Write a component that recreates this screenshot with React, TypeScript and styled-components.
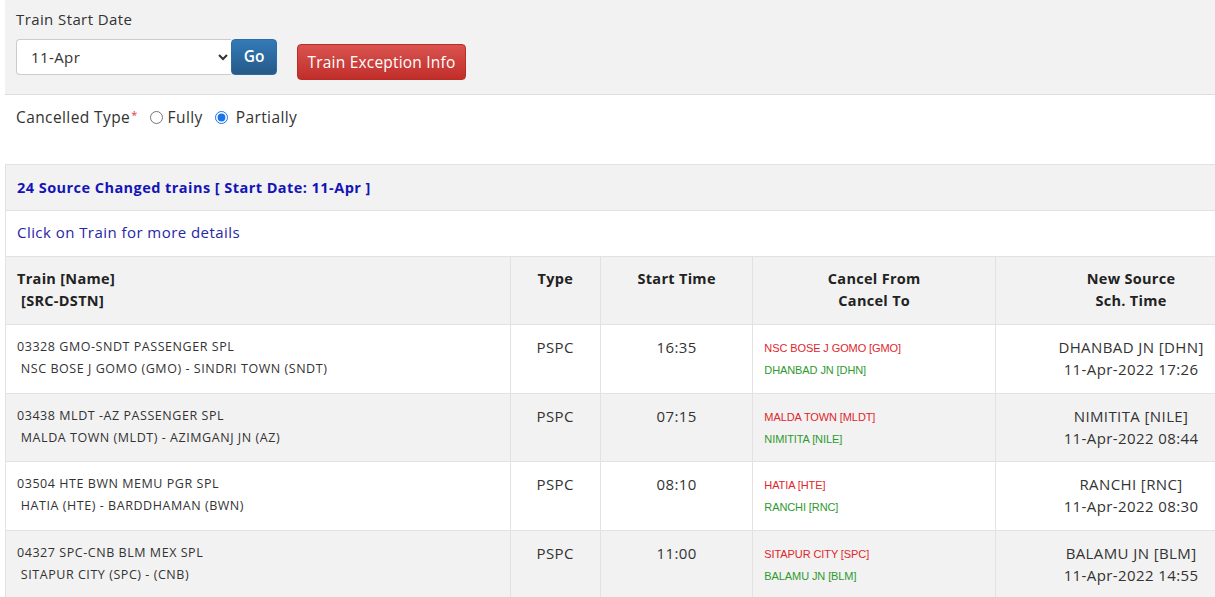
import { FC } from "react";
import styled, { createGlobalStyle } from "styled-components";

const Global = createGlobalStyle`
  html, body {
    margin: 0;
    padding: 0;
    background: #fff;
    overflow: hidden;
  }
  body {
    font-family: "Open Sans", "Noto Sans", sans-serif;
    color: #212529;
  }
`;

const Page = styled.div`
  width: 1262px;
  padding-left: 5px;
`;

const FilterPanel = styled.section`
  background: #f2f2f2;
  border-bottom: 1px solid #dedede;
  padding: 9px 0 15px 11px;
  height: 70px;
`;

const Label = styled.div`
  font-size: 15px;
  letter-spacing: 0.4px;
  line-height: 20px;
  color: #333;
  margin-bottom: 10px;
`;

const Controls = styled.div`
  display: flex;
  align-items: flex-start;
`;

const DateSelect = styled.select`
  width: 215px;
  height: 36px;
  border: 1px solid #ccc;
  border-right: none;
  border-radius: 4px 0 0 4px;
  background: #fff;
  padding: 0 8px 0 10px;
  font-family: inherit;
  font-size: 15px;
  letter-spacing: 0.4px;
  color: #333;
  outline: none;
`;

const GoButton = styled.button`
  height: 36px;
  width: 46px;
  border: 1px solid #2e6da4;
  border-radius: 4px;
  background: linear-gradient(#337ab7, #265a88);
  color: #fff;
  font-family: inherit;
  font-size: 15.5px;
  font-weight: 600;
  padding: 0 0 3px;
`;

const ExceptionButton = styled.button`
  margin: 5px 0 0 20px;
  height: 36px;
  width: 169px;
  border: 1px solid #b92c28;
  border-radius: 4px;
  background: linear-gradient(#d9534f, #c12e2a);
  color: #fff;
  font-family: inherit;
  font-size: 15.5px;
  letter-spacing: 0.2px;
  padding: 0 0 1px;
`;

const TypeRow = styled.div`
  display: flex;
  align-items: center;
  height: 44px;
  padding-left: 11px;
  font-size: 15.5px;
  letter-spacing: 0.4px;
  color: #333;
  margin-bottom: 25px;
`;

const Required = styled.span`
  color: #e4393c;
  font-size: 11px;
  align-self: flex-start;
  margin: 12px 12px 0 1px;
`;

const Radio = styled.label<{ $gap: number }>`
  display: flex;
  align-items: center;
  margin-right: 12px;

  input {
    margin: 0 ${(p) => p.$gap}px 0 0;
    width: 13px;
    height: 13px;
    accent-color: #1a73e8;
  }
`;

const Table = styled.table`
  width: 100%;
  border-collapse: collapse;
  border-left: 1px solid #e2e2e2;
`;

const Banner = styled.td<{ $shade?: boolean; $bold?: boolean }>`
  height: 46px;
  box-sizing: border-box;
  padding: 0 11px ${(p) => (p.$bold ? 1 : 3)}px;
  border-top: 1px solid #e2e2e2;
  background: ${(p) => (p.$shade ? "#f2f2f2" : "#fff")};
  color: ${(p) => (p.$bold ? "#1414b8" : "#2626a6")};
  font-weight: ${(p) => (p.$bold ? 700 : 400)};
  font-size: ${(p) => (p.$bold ? 14.5 : 15)}px;
  letter-spacing: 0.45px;
`;

const Head = styled.th<{ $w: number; $left?: boolean }>`
  width: ${(p) => p.$w}px;
  height: 68px;
  box-sizing: border-box;
  vertical-align: top;
  padding: 11px 11px 0;
  background: #f2f2f2;
  border: 1px solid #e2e2e2;
  border-left: ${(p) => (p.$left ? "none" : "1px solid #e2e2e2")};
  text-align: ${(p) => (p.$left ? "left" : "center")};
  font-size: 14.5px;
  letter-spacing: 0.3px;
  line-height: 22px;
  font-weight: 700;
  color: #222;
`;

const Row = styled.tr<{ $shade: boolean }>`
  background: ${(p) => (p.$shade ? "#f2f2f2" : "#fff")};
`;

const Cell = styled.td<{ $left?: boolean }>`
  height: 68.6px;
  box-sizing: border-box;
  vertical-align: top;
  padding: 11px 11px 0;
  border: 1px solid #e2e2e2;
  border-left: ${(p) => (p.$left ? "none" : "1px solid #e2e2e2")};
  text-align: ${(p) => (p.$left ? "left" : "center")};
  font-size: 15px;
  letter-spacing: 0.4px;
  line-height: 22px;
  color: #333;
`;

const TrainName = styled.div`
  font-size: 12.5px;
  letter-spacing: 0.55px;
  line-height: 22px;
  color: #333;
`;

const Station = styled.div<{ $to?: boolean }>`
  font-family: "Liberation Sans", Arial, sans-serif;
  font-size: 11px;
  line-height: 22px;
  letter-spacing: -0.1px;
  text-align: left;
  color: ${(p) => (p.$to ? "#2e9a2e" : "#e0262b")};
  margin-top: ${(p) => (p.$to ? 0 : 1)}px;
`;

type Train = {
  name: string;
  route: string;
  type: string;
  time: string;
  from: string;
  to: string;
  src: string;
  sch: string;
};

const trains: Train[] = [
  {
    name: "03328 GMO-SNDT PASSENGER SPL",
    route: "NSC BOSE J GOMO (GMO) - SINDRI TOWN (SNDT)",
    type: "PSPC",
    time: "16:35",
    from: "NSC BOSE J GOMO [GMO]",
    to: "DHANBAD JN [DHN]",
    src: "DHANBAD JN [DHN]",
    sch: "11-Apr-2022 17:26",
  },
  {
    name: "03438 MLDT -AZ PASSENGER SPL",
    route: "MALDA TOWN (MLDT) - AZIMGANJ JN (AZ)",
    type: "PSPC",
    time: "07:15",
    from: "MALDA TOWN [MLDT]",
    to: "NIMITITA [NILE]",
    src: "NIMITITA [NILE]",
    sch: "11-Apr-2022 08:44",
  },
  {
    name: "03504 HTE BWN MEMU PGR SPL",
    route: "HATIA (HTE) - BARDDHAMAN (BWN)",
    type: "PSPC",
    time: "08:10",
    from: "HATIA [HTE]",
    to: "RANCHI [RNC]",
    src: "RANCHI [RNC]",
    sch: "11-Apr-2022 08:30",
  },
  {
    name: "04327 SPC-CNB BLM MEX SPL",
    route: "SITAPUR CITY (SPC) - (CNB)",
    type: "PSPC",
    time: "11:00",
    from: "SITAPUR CITY [SPC]",
    to: "BALAMU JN [BLM]",
    src: "BALAMU JN [BLM]",
    sch: "11-Apr-2022 14:55",
  },
];

const App: FC = () => {
  return (
    <Page>
      <Global />
      <FilterPanel>
        <Label>Train Start Date</Label>
        <Controls>
          <DateSelect defaultValue="11-Apr">
            <option>10-Apr</option>
            <option>11-Apr</option>
            <option>12-Apr</option>
          </DateSelect>
          <GoButton>Go</GoButton>
          <ExceptionButton>Train Exception Info</ExceptionButton>
        </Controls>
      </FilterPanel>

      <TypeRow>
        Cancelled Type<Required>*</Required>
        <Radio $gap={5}>
          <input type="radio" name="ctype" />
          Fully
        </Radio>
        <Radio $gap={8}>
          <input type="radio" name="ctype" defaultChecked />
          Partially
        </Radio>
      </TypeRow>

      <Table>
        <tbody>
          <tr>
            <Banner colSpan={5} $shade $bold>
              24 Source Changed trains [ Start Date: 11-Apr ]
            </Banner>
          </tr>
          <tr>
            <Banner colSpan={5}>Click on Train for more details</Banner>
          </tr>
          <tr>
            <Head $w={503} $left>
              Train [Name]
              <br />
              &nbsp;[SRC-DSTN]
            </Head>
            <Head $w={90}>Type</Head>
            <Head $w={152}>Start Time</Head>
            <Head $w={242}>
              Cancel From
              <br />
              Cancel To
            </Head>
            <Head $w={270}>
              New Source
              <br />
              Sch. Time
            </Head>
          </tr>
          {trains.map((t, i) => (
            <Row key={t.name} $shade={i % 2 === 1}>
              <Cell $left>
                <TrainName>{t.name}</TrainName>
                <TrainName>&nbsp;{t.route}</TrainName>
              </Cell>
              <Cell>{t.type}</Cell>
              <Cell>{t.time}</Cell>
              <Cell>
                <Station>{t.from}</Station>
                <Station $to>{t.to}</Station>
              </Cell>
              <Cell>
                <div>{t.src}</div>
                <div>{t.sch}</div>
              </Cell>
            </Row>
          ))}
        </tbody>
      </Table>
    </Page>
  );
};

export default App;
